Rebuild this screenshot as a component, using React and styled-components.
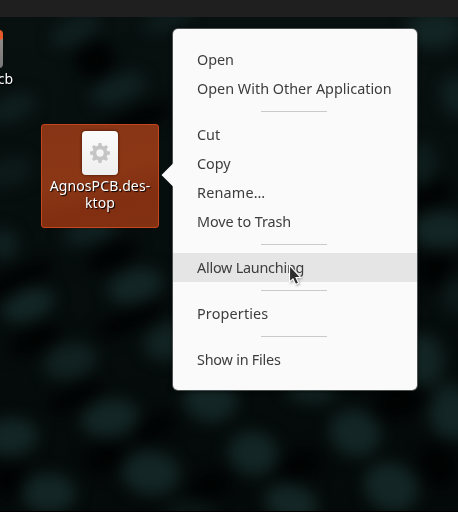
import React from "react";
import styled, { createGlobalStyle } from "styled-components";

const GlobalStyle = createGlobalStyle`
  * { box-sizing: border-box; }
  body { margin: 0; background: #040808; overflow: hidden; }
`;

const Desktop = styled.main`
  position: relative;
  display: flex;
  flex-direction: column;
  width: 458px;
  height: 512px;
  overflow: hidden;
  background: #040909;
  font-family: "Noto Sans", "Open Sans", sans-serif;
  cursor: default;
`;

const WallpaperArt = styled.svg`
  position: absolute;
  inset: 0;
`;

const TopBar = styled.header`
  position: relative;
  height: 17px;
  flex: none;
  background: #1f1f1f;
`;

const DesktopItem = styled.div`
  position: absolute;
  left: ${(p) => p.$x}px;
  top: ${(p) => p.$y}px;
  width: 118px;
  height: 104px;
  display: flex;
  flex-direction: column;
  align-items: center;
  padding-top: 6px;
  border-radius: 3px;
  border: 1px solid ${(p) => (p.$selected ? "#c7451a" : "transparent")};
  background: ${(p) => (p.$selected ? "linear-gradient(165deg, #873416 0%, #8b3716 48%, #812e11 75%, #833113 100%)" : "transparent")};
`;

const FileIcon = styled.div`
  width: 36px;
  height: 44px;
  flex: none;
  display: flex;
  align-items: center;
  justify-content: center;
  border-radius: 4px;
  background: linear-gradient(#fbfbfb, #efefef);
  box-shadow: 0 0 2px 1px rgba(50, 15, 0, 0.45);
`;

const FolderIcon = styled.div`
  width: 44px;
  height: 38px;
  flex: none;
  border-radius: 4px;
  background: linear-gradient(163deg, #e65a2a 0 43%, #8d8b89 44%, #777 100%);
`;

const ItemLabel = styled.div`
  display: flex;
  flex-direction: column;
  align-items: center;
  margin-top: 2px;
  color: #fff;
  font-size: 14px;
  line-height: 17px;
  white-space: nowrap;
  text-shadow: 1px 1px 1px #000;
`;

const LabelLine = styled.span`
  letter-spacing: ${(p) => p.$tracking || 0}px;
`;

const Menu = styled.nav`
  position: absolute;
  left: 173px;
  top: 29px;
  width: 244px;
  height: 361px;
  padding: 16px 0;
  border-radius: 5px;
  background: #fafafa;
  box-shadow: 0 0 0 1px #4b5150, 0 1px 4px 1px rgba(0, 0, 0, 0.5);
`;

const MenuArrow = styled.svg`
  position: absolute;
  left: -12px;
  top: 133px;
`;

const MenuItem = styled.div`
  height: 29px;
  padding-left: 24px;
  background: ${(p) => (p.$active ? "#e5e5e5" : "transparent")};
  color: #3d3d3d;
  font-size: 14.4px;
  line-height: 29px;
  letter-spacing: ${(p) => p.$tracking || 0}px;
  white-space: nowrap;
`;

const Separator = styled.div`
  width: 66px;
  height: 1px;
  margin: 8px 0 8px 88px;
  background: #cacaca;
`;

const Pointer = styled.svg`
  position: absolute;
  left: 287px;
  top: 264px;
  filter: drop-shadow(1px 1px 1px rgba(0, 0, 0, 0.3));
`;

const glows = [
  [75, 31, 26, 13, -25, 0.7], [118, 89, 29, 14, -20, 0.8], [12, 108, 25, 13, -20, 0.7],
  [168, 20, 26, 10, -20, 0.6], [10, 172, 24, 14, -20, 0.5], [3, 244, 15, 16, -20, 0.8],
  [90, 231, 28, 13, -15, 0.8], [28, 305, 27, 16, -20, 1], [135, 286, 28, 17, -15, 1],
  [70, 361, 27, 18, -15, 0.85], [171, 341, 28, 19, -15, 0.9], [110, 418, 29, 19, -10, 1],
  [11, 437, 27, 19, -5, 1], [49, 493, 27, 20, 0, 1], [151, 473, 29, 22, 5, 1],
  [210, 400, 27, 22, 10, 1], [253, 453, 25, 22, 15, 1], [291, 503, 27, 19, 15, 1],
  [355, 433, 26, 23, 25, 1], [391, 487, 28, 24, 25, 1], [454, 415, 25, 24, 20, 1],
  [311, 391, 26, 12, 5, 0.9], [434, 30, 29, 18, -5, 0.95], [457, 96, 16, 21, -10, 0.8],
  [420, 164, 16, 23, 0, 0.65], [441, 230, 29, 19, 0, 1], [456, 295, 15, 20, 0, 0.5],
  [421, 360, 23, 26, 0, 0.95], [449, 392, 16, 10, 0, 0.7], [190, 510, 26, 9, 0, 0.5],
];

const shadows = [
  [95, 60, 21, 20], [135, 122, 40, 12], [18, 280, 40, 12], [112, 256, 27, 14],
  [130, 320, 38, 11], [35, 340, 28, 14], [75, 397, 30, 12], [155, 427, 25, 12],
  [105, 457, 22, 16], [8, 480, 18, 18], [210, 485, 23, 15], [300, 465, 25, 15],
  [400, 400, 28, 19], [438, 465, 20, 24], [435, 270, 20, 19], [430, 195, 23, 15],
];

function Wallpaper() {
  return (
    <WallpaperArt width="458" height="512" viewBox="0 0 458 512" aria-hidden="true">
      <defs>
        <filter id="soften" x="-50%" y="-50%" width="200%" height="200%" colorInterpolationFilters="sRGB">
          <feGaussianBlur stdDeviation="7.5" />
        </filter>
        <linearGradient id="night" x1="0" y1="0" x2="0" y2="1">
          <stop offset="0" stopColor="#081010" />
          <stop offset="1" stopColor="#040a09" />
        </linearGradient>
      </defs>
      <rect width="458" height="512" fill="url(#night)" />
      <g filter="url(#soften)">
        {shadows.map(([x, y, rx, ry]) => (
          <ellipse key={`${x}-${y}`} rx={rx} ry={ry} fill="#010303" transform={`translate(${x} ${y}) rotate(-25)`} />
        ))}
        {glows.map(([x, y, rx, ry, turn, strength]) => (
          <ellipse key={`${x}-${y}`} rx={rx} ry={ry} fill="#132625" opacity={strength} transform={`translate(${x} ${y}) rotate(${turn})`} />
        ))}
      </g>
      <path d="M0 511.5H458" stroke="#000" />
    </WallpaperArt>
  );
}

function Gear() {
  return (
    <svg width="22" height="22" viewBox="-11 -11 22 22" aria-hidden="true">
      <g fill="#c5c5c5">
        {[0, 45, 90, 135].map((turn) => (
          <path key={turn} d="M-2 -7L-1.4 -10H1.4L2 -7V7L1.4 10H-1.4L-2 7Z" transform={`rotate(${turn})`} />
        ))}
        <circle r="7.6" />
      </g>
      <circle r="3.7" fill="#f5f5f5" />
    </svg>
  );
}

const menuGroups = [
  [{ text: "Open", tracking: -0.1 }, { text: "Open With Other Application" }],
  [
    { text: "Cut" },
    { text: "Copy" },
    { text: "Rename…", tracking: 0.2 },
    { text: "Move to Trash", tracking: -0.07 },
  ],
  [{ text: "Allow Launching", active: true, tracking: -0.24 }],
  [{ text: "Properties", tracking: 0.15 }],
  [{ text: "Show in Files", tracking: -0.22 }],
];

function ContextMenu() {
  return (
    <Menu>
      <MenuArrow width="13" height="26" viewBox="0 0 13 26" aria-hidden="true">
        <path d="M13 0V26L12 24.5L0.5 13L12 1.5Z" fill="#fafafa" />
      </MenuArrow>
      {menuGroups.map((group, index) => (
        <React.Fragment key={group[0].text}>
          {index > 0 && <Separator />}
          {group.map((item) => (
            <MenuItem key={item.text} $active={item.active} $tracking={item.tracking}>
              {item.text}
            </MenuItem>
          ))}
        </React.Fragment>
      ))}
    </Menu>
  );
}

export default function App() {
  return (
    <>
      <GlobalStyle />
      <Desktop>
        <Wallpaper />
        <TopBar />
        <DesktopItem $x={-78} $y={23}>
          <FolderIcon />
          <ItemLabel><LabelLine>agnospcb</LabelLine></ItemLabel>
        </DesktopItem>
        <DesktopItem $x={41} $y={124} $selected>
          <FileIcon><Gear /></FileIcon>
          <ItemLabel>
            <LabelLine $tracking={0.12}>AgnosPCB.des-</LabelLine>
            <LabelLine $tracking={0.1}>ktop</LabelLine>
          </ItemLabel>
        </DesktopItem>
        <ContextMenu />
        <Pointer width="16" height="25" viewBox="0 0 16 25" aria-hidden="true">
          <path d="M2.5 1.5V18L6 14.9L8.6 20.4L11.6 19L9 13.5H13.6Z" fill="#2d2d2d" stroke="#fff" strokeWidth="1.1" />
        </Pointer>
      </Desktop>
    </>
  );
}
